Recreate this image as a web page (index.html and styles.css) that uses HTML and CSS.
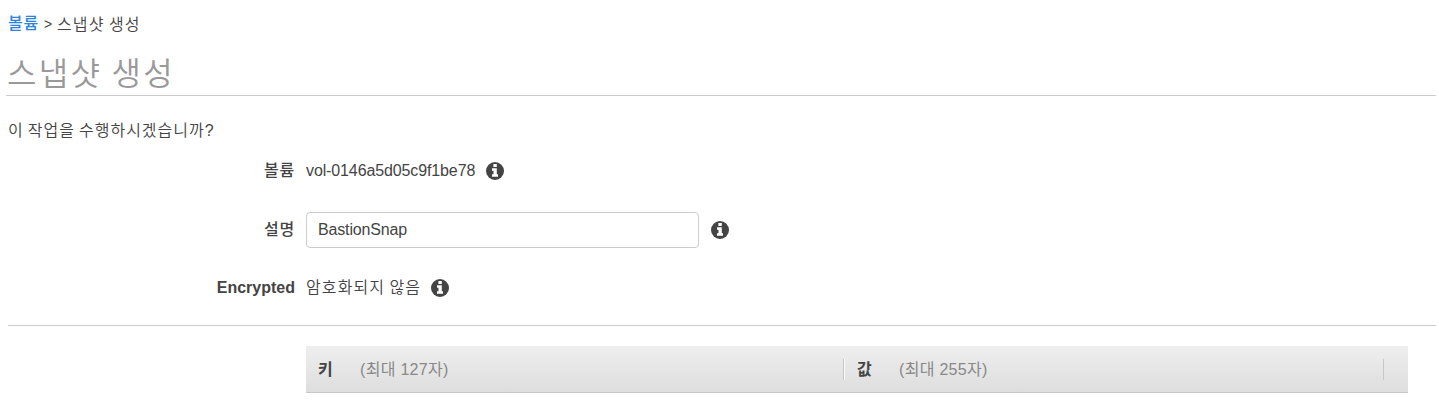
FILE: index.html
```html
<!DOCTYPE html>
<html lang="ko">
<head>
<meta charset="utf-8">
<title>스냅샷 생성</title>
<link rel="stylesheet" href="styles.css">
</head>
<body>
<svg class="sprite" width="0" height="0">
  <symbol id="info" viewBox="0 0 18 18">
    <circle cx="9" cy="9" r="9" fill="#444"/>
    <path fill="#fff" d="M7.4 2h3.4v3H7.4zM6 6.3h4.8v6H12v2.4H6v-2.4h1.5V8.7H6z"/>
  </symbol>
</svg>
<nav class="crumbs"><a class="crumb-link">볼륨</a><span class="sep">&gt;</span><span class="crumb-current">스냅샷 생성</span></nav>
<h1 class="title"><span class="title-text">스냅샷 생성</span></h1>
<p class="question">이 작업을 수행하시겠습니까?</p>
<div class="row row-volume">
  <span class="label hangul">볼륨</span><span class="value volume-id">vol-0146a5d05c9f1be78</span>
  <svg class="icon"><use href="#info"/></svg>
</div>
<div class="row row-desc">
  <span class="label hangul">설명</span><input class="field" type="text" value="BastionSnap">
  <svg class="icon"><use href="#info"/></svg>
</div>
<div class="row row-enc">
  <span class="label">Encrypted</span><span class="value korean">암호화되지 않음</span>
  <svg class="icon"><use href="#info"/></svg>
</div>
<hr class="divider">
<div class="tags">
  <div class="cell key"><b class="name">키</b><span class="hint">(최대 127자)</span></div>
  <div class="cell val"><b class="name">값</b><span class="hint">(최대 255자)</span></div>
</div>
</body>
</html>
```
FILE: styles.css
```css
* { box-sizing: border-box; }
body {
  margin: 0;
  height: 400px;
  overflow: hidden;
  background: #fff;
  color: #444;
  font: 16px/24px "Liberation Sans", "Noto Sans CJK KR", sans-serif;
}
.sprite { display: block; }
.crumbs { display: flex; height: 36px; padding: 12px 0 0 8px; white-space: nowrap; }
.crumb-link { width: 36px; color: #2a84de; font-weight: 500; letter-spacing: .8px; }
.sep { width: 13px; font-size: 14px; }
.crumb-current { padding-top: 1px; letter-spacing: 1.1px; word-spacing: -1px; font-weight: 350; }
.title {
  display: flex;
  height: 60px;
  margin: 0 3px 0 6px;
  padding: 19px 0 0 1px;
  border-bottom: 1px solid #ccc;
  color: #999;
  font-size: 32px;
  font-weight: 350;
  line-height: 38px;
}
.title-text { letter-spacing: 2.3px; word-spacing: -2px; }
.question { margin: 0; padding: 23px 0 0 8px; height: 62px; letter-spacing: 1px; word-spacing: -1.4px; font-weight: 350; }
.row { display: flex; align-items: center; }
.row-volume { height: 26px; }
.row-desc { height: 36px; margin-top: 28px; }
.row-enc { height: 26px; margin-top: 27px; }
.label { width: 295px; margin-right: 11px; text-align: right; font-weight: 700; }
.hangul { font-weight: 500; letter-spacing: .8px; }
.volume-id { width: 169px; white-space: nowrap; letter-spacing: -.12px; }
.korean { width: 114px; letter-spacing: 1.1px; word-spacing: -1.2px; white-space: nowrap; font-weight: 350; }
.icon { width: 18px; height: 18px; margin-left: 11px; }
.field {
  width: 393px;
  height: 36px;
  padding: 0 11px;
  border: 1px solid #ccc;
  border-radius: 4px;
  background: #fff;
  color: #444;
  font: inherit;
  letter-spacing: -.15px;
  outline: none;
}
.row-desc .icon { margin-left: 12px; }
.divider { margin: 24px 3px 0 8px; border: 0; border-top: 1px solid #ccc; }
.tags {
  display: flex;
  align-items: center;
  width: 1102px;
  height: 47px;
  margin: 20px 0 0 306px;
  border-bottom: 1px solid #c8c8c8;
  background: linear-gradient(#eee, #dedede);
}
.cell { display: flex; align-items: center; height: 21px; padding-left: 12px; border-right: 1px solid #c8c8c8; }
.key { width: 538px; box-shadow: 1px 0 #f9f9f9; }
.val { width: 540px; padding-left: 13px; }
.name { width: 42px; padding-top: 2px; }
.hint { padding-top: 2px; color: #888; letter-spacing: .3px; }
```
